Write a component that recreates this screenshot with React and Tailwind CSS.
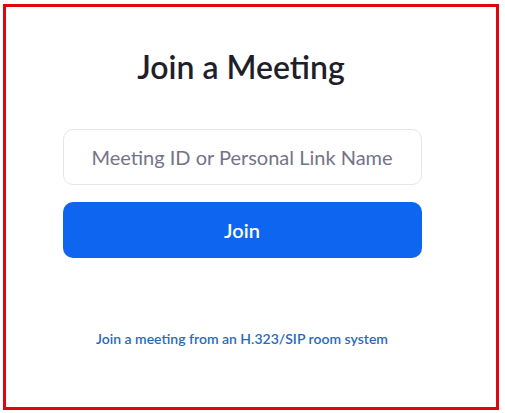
export default function App() {
  return (
    <div className="w-[505px] h-[413px] bg-white p-[3px] pt-[4px]" style={{ fontFamily: "Lato, 'Open Sans', sans-serif" }}>
      <div className="w-[496px] h-[406px] border-[3px] border-[#e0060d] flex flex-col items-center">
        <h1 className="mt-[41px] text-[32px] font-semibold text-[#1f1f2b] leading-[38px] -ml-[20px]">Join a Meeting</h1>
        <div className="mt-[43px] w-[359px] h-[56px] rounded-[10px] border border-[#e4e6ea] flex items-center justify-center -ml-[18px]">
          <span className="text-[20px] text-[#747487]">Meeting ID or Personal Link Name</span>
        </div>
        <button className="mt-[17px] w-[359px] h-[56px] rounded-[10px] bg-[#0e66f0] text-white text-[20px] font-semibold -ml-[18px]">
          Join
        </button>
        <a className="mt-[70px] text-[14px] font-semibold text-[#2a6ab8] -ml-[18px]">
          Join a meeting from an H.323/SIP room system
        </a>
      </div>
    </div>
  );
}
